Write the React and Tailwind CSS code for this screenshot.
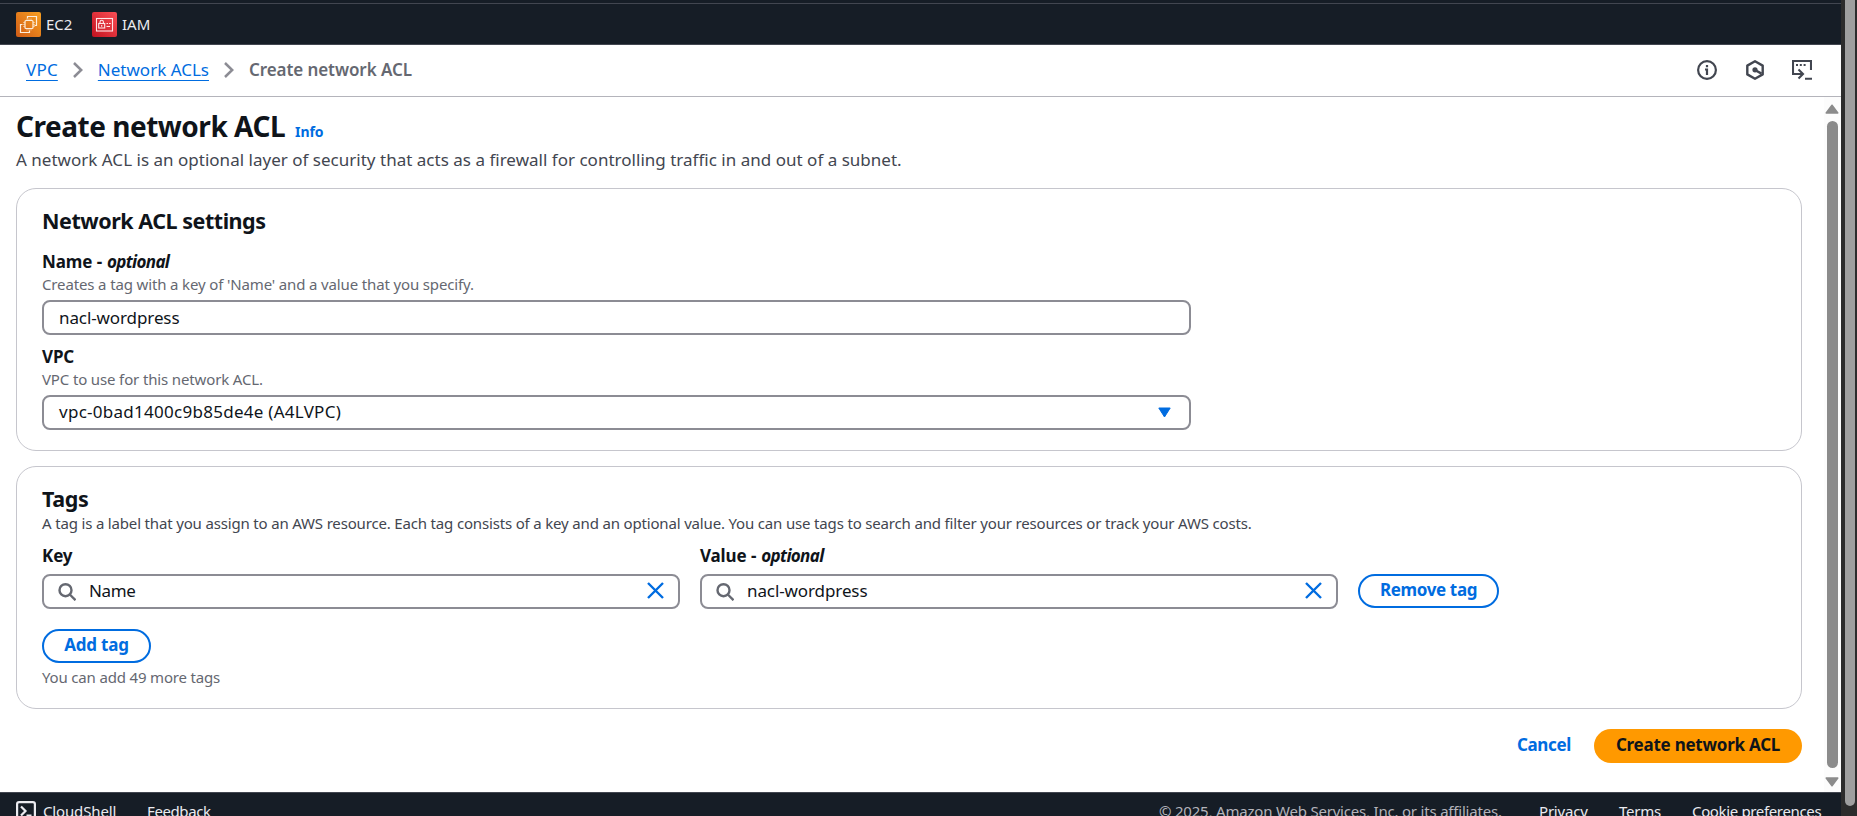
import React from "react";

function Ec2Icon() {
  return (
    <svg width="25" height="25" viewBox="0 0 25 25" fill="none">
      <defs>
        <linearGradient id="ec2" x1="0" y1="1" x2="1" y2="0">
          <stop offset="0" stopColor="#d05c17" />
          <stop offset="1" stopColor="#f9a021" />
        </linearGradient>
      </defs>
      <rect width="25" height="25" rx="2" fill="url(#ec2)" />
      <g stroke="#fdeedd" strokeWidth="1.2">
        <rect x="9" y="8.500" width="8" height="8" rx="1" />
        <path d="M11.500 6.500V4.500h9v9h-2M6.500 12.500H4.500v8h9v-2" />
        <path d="M11 8.500v-2M13 8.500v-2M15 8.500v-2M11 18.500v-2M13 18.500v-2M15 18.500v-2M9 10.500H7M9 12.500H7M9 14.500H7M19 10.500h-2M19 12.500h-2M19 14.500h-2" strokeOpacity=".5" />
      </g>
    </svg>
  );
}

function IamIcon() {
  return (
    <svg width="25" height="25" viewBox="0 0 25 25" fill="none">
      <defs>
        <linearGradient id="iam" x1="0" y1="1" x2="1" y2="0">
          <stop offset="0" stopColor="#c2121f" />
          <stop offset="1" stopColor="#fb4f55" />
        </linearGradient>
      </defs>
      <rect width="25" height="25" rx="2" fill="url(#iam)" />
      <g stroke="#ffe6e8" strokeWidth="1.1">
        <rect x="4.500" y="6.500" width="16" height="12.500" />
        <rect x="6.700" y="11.500" width="6" height="4.500" />
        <path d="M8 11.500V10a1.700 1.700 0 0 1 3.400 0v1.500M9.700 13v1.700M14.500 11.500h1.500M17 11.500h1.800M14.500 14.500h3.500" />
      </g>
    </svg>
  );
}

function Chevron() {
  return (
    <svg width="10" height="16" viewBox="0 0 10 16" fill="none" stroke="#8c8c94" strokeWidth="2.500">
      <path d="M1 1l7.200 7L1 15" />
    </svg>
  );
}

function InfoIcon() {
  return (
    <svg width="20" height="20" viewBox="0 0 20 20" fill="none" stroke="#424650" strokeWidth="2.200">
      <circle cx="10" cy="10" r="8.900" />
      <path d="M10 8.600V15M8 9.500h2M10 5v2.300" />
    </svg>
  );
}

function HexIcon() {
  return (
    <svg width="18" height="20" viewBox="0 0 18 20" fill="none" stroke="#424650" strokeWidth="2.400" strokeLinejoin="round">
      <path d="M9 1.300l7.700 4.300v8.800L9 18.700l-7.700-4.300V5.600z" />
      <circle cx="9" cy="9.800" r="2.600" fill="#424650" stroke="none" />
      <path d="M9 10l6.500 3.600" />
    </svg>
  );
}

function ShellIcon() {
  return (
    <svg width="20" height="20" viewBox="0 0 20 20" fill="none" stroke="#424650" strokeWidth="2.100">
      <path d="M5 14H1V1h18v9M13 18.800h7M4 14h6.500M6.500 9.500L11 14l-4.500 4.500" />
      <path d="M4 5h2M7.800 5h2M11.600 5h2" />
    </svg>
  );
}

function SearchIcon() {
  return (
    <svg width="18" height="18" viewBox="0 0 18 18" fill="none" stroke="#656871" strokeWidth="2.400">
      <circle cx="7.500" cy="7.200" r="6" />
      <path d="M11.800 11.500l5.700 5.700" />
    </svg>
  );
}

function ClearIcon() {
  return (
    <svg className="relative -top-px" width="17" height="17" viewBox="0 0 17 17" stroke="#006ce0" strokeWidth="2.400">
      <path d="M1 1l15 15M16 1L1 16" />
    </svg>
  );
}

function Label({ children, optional }) {
  return (
    <div className="h-[22px] text-[17px] leading-[22px] font-bold tracking-[-0.15px] text-[#0f141a]">
      {children}
      {optional && (
        <>
          <span className="tracking-[0.2px]">{" - "}</span>
          <i className="tracking-[-0.65px]">optional</i>
        </>
      )}
    </div>
  );
}

function Description({ children }) {
  return <div className="mt-px mb-1.5 h-5 text-[15px] leading-5 tracking-[-0.14px] text-[#656871]">{children}</div>;
}

function TagInput({ value, tight }) {
  return (
    <div className="mt-[7px] flex h-[35px] w-[638px] items-center rounded-[8px] border-2 border-[#8c8c94] px-[14px]">
      <SearchIcon />
      <span
        className={
          tight
            ? "ml-[13px] flex-1 pb-0.5 text-[17px] leading-[22px] tracking-[-0.4px]"
            : "ml-[13px] flex-1 pb-0.5 text-[17px] leading-[22px] tracking-[-0.1px]"
        }
      >
        {value}
      </span>
      <ClearIcon />
    </div>
  );
}

function Header() {
  return (
    <header className="h-[45px] shrink-0 border-b border-[#424650] bg-[#161d26] pt-[3px]">
      <nav className="flex h-[41px] items-center border-t border-[#424650] pl-4 text-[15px] text-[#ebebf0]">
        <Ec2Icon />
        <span className="ml-[5px] w-[46px]">EC2</span>
        <IamIcon />
        <span className="ml-[5px]">IAM</span>
      </nav>
    </header>
  );
}

function Breadcrumbs() {
  return (
    <div className="flex h-[52px] shrink-0 items-center justify-between border-b border-[#b4b4bb] pr-[29px] pb-px pl-[26px] text-[17px] leading-[22px]">
      <div className="flex items-center">
        <a className="mr-[15px] tracking-[0.2px] text-[#006ce0] underline decoration-1 underline-offset-4">VPC</a>
        <Chevron />
        <a className="mx-[15px] text-[#006ce0] underline decoration-1 underline-offset-4">Network ACLs</a>
        <Chevron />
        <span className="ml-[15px] font-semibold tracking-[-0.08px] text-[#656871]">Create network ACL</span>
      </div>
      <div className="flex items-center">
        <InfoIcon />
        <span className="mr-7 ml-[29px]">
          <HexIcon />
        </span>
        <ShellIcon />
      </div>
    </div>
  );
}

function Settings() {
  return (
    <section className="mt-[17px] h-[263px] rounded-[20px] border border-[#c6c6cd] px-[25px] pt-[19px]">
      <h2 className="mb-[17px] text-[21.5px] leading-[26px] font-bold tracking-[-0.47px]">Network ACL settings</h2>
      <Label optional>Name</Label>
      <Description>Creates a tag with a key of 'Name' and a value that you specify.</Description>
      <div className="mb-[11px] flex h-[35px] w-[1149px] items-center rounded-[8px] border-2 border-[#8c8c94] px-[15px] text-[17px] tracking-[-0.1px]">
        nacl-wordpress
      </div>
      <Label>VPC</Label>
      <Description>VPC to use for this network ACL.</Description>
      <div className="flex h-[35px] w-[1149px] items-center justify-between rounded-[8px] border-2 border-[#8c8c94] pr-[18px] pl-[15px] text-[17px] tracking-[0.27px]">
        <span className="pb-0.5">vpc-0bad1400c9b85de4e (A4LVPC)</span>
        <svg width="13" height="11" viewBox="0 0 13 11" fill="#006ce0" stroke="#006ce0" strokeLinejoin="round">
          <path d="M.8 1h11.400L6.500 10z" />
        </svg>
      </div>
    </section>
  );
}

function Tags() {
  return (
    <section className="mt-[15px] h-[243px] rounded-[20px] border border-[#c6c6cd] px-[25px] pt-[19px]">
      <h2 className="text-[21.5px] leading-[26px] font-bold tracking-[-0.4px]">Tags</h2>
      <p className="mt-px mb-3 text-[15px] leading-5 tracking-[-0.168px] text-[#424650]">
        A tag is a label that you assign to an AWS resource. Each tag consists of a key and an optional value. You can
        use tags to search and filter your resources or track your AWS costs.
      </p>
      <div className="flex gap-5">
        <div>
          <Label>Key</Label>
          <TagInput value="Name" tight />
        </div>
        <div>
          <Label optional>Value</Label>
          <TagInput value="nacl-wordpress" />
        </div>
        <button className="mt-[29px] flex h-[34px] w-[141px] items-center justify-center rounded-full border-2 border-[#006ce0] pb-[3px] text-[17px] font-bold tracking-[-0.35px] text-[#006ce0]">
          Remove tag
        </button>
      </div>
      <button className="mt-5 flex h-[34px] w-[109px] items-center justify-center rounded-full border-2 border-[#006ce0] pb-[3px] text-[17px] font-bold tracking-[-0.2px] text-[#006ce0]">
        Add tag
      </button>
      <p className="mt-1 text-[15px] leading-5 tracking-[-0.17px] text-[#656871]">You can add 49 more tags</p>
    </section>
  );
}

function InnerScrollbar() {
  return (
    <div className="flex w-[17px] flex-col items-center bg-[#fcfcfc] pt-[7px] pr-px pb-[5px]">
      <svg width="14" height="10" viewBox="0 0 14 10" fill="#8b8b8b" stroke="#8b8b8b" strokeWidth="1.500" strokeLinejoin="round">
        <path d="M7 1.200L12.800 9H1.200z" />
      </svg>
      <div className="mt-[7px] mb-[9px] w-[11px] flex-1 rounded-full bg-[#8b8b8b]" />
      <svg width="14" height="10" viewBox="0 0 14 10" fill="#8b8b8b" stroke="#8b8b8b" strokeWidth="1.500" strokeLinejoin="round">
        <path d="M7 8.800L12.800 1H1.200z" />
      </svg>
    </div>
  );
}

function Footer() {
  return (
    <footer className="flex h-[24px] shrink-0 items-start overflow-hidden border-t border-[#424650] bg-[#161d26] pl-4 text-[15px] leading-5 text-[#ebebf0]">
      <svg className="mt-2 shrink-0" width="20" height="20" viewBox="0 0 20 20" fill="none" stroke="#ebebf0" strokeWidth="2.200">
        <rect x="1.100" y="1.100" width="17.800" height="17.800" rx="2" />
        <path d="M5 5.500l4.500 4.500L5 14.500M10.500 14.500h5" />
      </svg>
      <span className="mt-2 ml-[7px] w-[104px] tracking-[-0.15px]">CloudShell</span>
      <span className="mt-2 flex-1 tracking-[-0.4px]">Feedback</span>
      <span className="mt-2 w-[380px] tracking-[-0.2px] text-[#b4b4bb]">© 2025, Amazon Web Services, Inc. or its affiliates.</span>
      <span className="mt-2 w-[80px] tracking-[-0.2px]">Privacy</span>
      <span className="mt-2 w-[73px] tracking-[-0.25px]">Terms</span>
      <span className="mt-2 w-[149px] tracking-[-0.35px]">Cookie preferences</span>
    </footer>
  );
}

export default function App() {
  return (
    <div className="flex h-[816px] w-[1857px] overflow-hidden bg-white font-['Noto_Sans',sans-serif] text-[#0f141a]">
      <div className="flex w-[1841px] flex-col">
        <Header />
        <Breadcrumbs />
        <div className="flex h-[695px]">
          <main className="w-[1824px] pt-3 pr-[22px] pl-4">
            <div className="flex h-[34px] items-baseline leading-[34px]">
              <h1 className="text-[28px] font-bold tracking-[-0.48px]">Create network ACL</h1>
              <a className="ml-[10px] text-[14px] font-bold tracking-[-0.1px] text-[#006ce0]">Info</a>
            </div>
            <p className="mt-1.5 text-[17px] leading-[22px] tracking-[0.015px] text-[#424650]">
              A network ACL is an optional layer of security that acts as a firewall for controlling traffic in and out of
              a subnet.
            </p>
            <Settings />
            <Tags />
            <div className="mt-5 flex items-center justify-end text-[17px] font-bold">
              <a className="mr-[23px] pb-[3px] tracking-[-0.35px] text-[#006ce0]">Cancel</a>
              <button className="flex h-[34px] w-[208px] items-center justify-center rounded-full bg-[#ff9900] pb-[3px] tracking-[-0.25px]">
                Create network ACL
              </button>
            </div>
          </main>
          <InnerScrollbar />
        </div>
        <Footer />
      </div>
      <div className="flex w-4 flex-col bg-[#2c2c2c] pl-1">
        <div className="h-[806px] w-[10px] rounded-b-[5px] bg-[#9f9f9f]" />
      </div>
    </div>
  );
}
